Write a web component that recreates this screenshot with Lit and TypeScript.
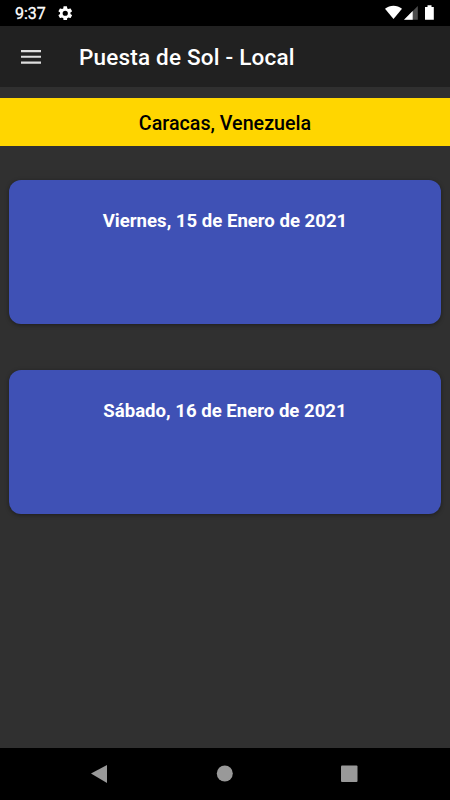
import { LitElement, html, css } from "lit";
import { customElement, property } from "lit/decorators.js";

@customElement("day-card")
class DayCard extends LitElement {
  @property() date = "";
  static styles = css`
    :host { display: block; height: 144.5px; border-radius: 12px; background: #3f51b5; box-shadow: 0 1px 4px rgba(0,0,0,.4); }
    .date { padding-top: 29px; text-align: center; font: 700 18.6px/24px Roboto, sans-serif; color: #fff; white-space: nowrap; }
  `;
  render() { return html`<div class="date">${this.date}</div>`; }
}

@customElement("app-root")
class AppRoot extends LitElement {
  static styles = css`
    :host { display: flex; flex-direction: column; width: 450px; height: 800px; background: #303030; font-family: Roboto, sans-serif; overflow: hidden; }
    .status { height: 26px; background: #000; color: #fff; display: flex; align-items: center; justify-content: space-between; padding: 0 15px; box-sizing: border-box; }
    .group { display: flex; align-items: center; gap: 12px; }
    .time { font: 400 16px/24px Roboto, sans-serif; padding-top: 2px; -webkit-text-stroke: .3px #fff; }
    .bar { height: 61px; background: #212121; display: flex; align-items: center; padding-left: 20.5px; gap: 38px; color: #fff; }
    .title { font: 500 22.5px/30px Roboto, sans-serif; letter-spacing: .2px; white-space: nowrap; padding-top: 1px; }
    .place { margin-top: 11px; height: 48.3px; background: #ffd600; color: #000; text-align: center; font: 500 19.7px/51px Roboto, sans-serif; }
    .list { flex: 1; padding: 33.5px 8.7px 0; display: flex; flex-direction: column; gap: 45.5px; }
    svg { display: block; flex: none; }
  `;
  render() {
    return html`
      <div class="status">
        <div class="group">
          <span class="time">9:37</span>
          <svg width="14.500" height="14.500" viewBox="2 2 20 20" fill="#fff"><path fill-rule="evenodd" d="M19.14 12.94c.04-.3.06-.61.06-.94 0-.32-.02-.64-.07-.94l2.03-1.58a.49.49 0 0 0 .12-.61l-1.92-3.32a.488.488 0 0 0-.59-.22l-2.39.96c-.5-.38-1.03-.7-1.62-.94l-.36-2.54a.484.484 0 0 0-.48-.41h-3.84c-.24 0-.43.17-.47.41l-.36 2.54c-.59.24-1.13.57-1.62.94l-2.39-.96c-.22-.08-.47 0-.59.22L2.74 8.87c-.12.21-.08.47.12.61l2.03 1.58c-.05.3-.09.63-.09.94s.02.64.07.94l-2.03 1.58a.49.49 0 0 0-.12.61l1.92 3.32c.12.22.37.29.59.22l2.39-.96c.5.38 1.03.7 1.62.94l.36 2.54c.05.24.24.41.48.41h3.84c.24 0 .44-.17.47-.41l.36-2.54c.59-.24 1.13-.56 1.62-.94l2.39.96c.22.08.47 0 .59-.22l1.92-3.32c.12-.22.07-.47-.12-.61zM12 15.600a3.600 3.600 0 1 1 0-7.200 3.600 3.600 0 0 1 0 7.200z"/></svg>
        </div>
        <svg width="50" height="26" viewBox="0 0 50 26" fill="#fff"><path d="M0 8.700C5 4.800 12 4.800 17 8.700L8.500 19z"/><path d="M19 19.700 32.800 6v13.700z" fill="#4d4d4d"/><path d="M19 19.700 27.700 11v8.700z"/><path d="M40 7h2.500V5.300h4V7h2.300v12.700H40z"/></svg>
      </div>
      <div class="bar">
        <svg width="20.500" height="14" viewBox="0 0 20.500 14" fill="#dedede"><path d="M0 0h20.500v2.200H0zM0 5.800h20.500v2H0zM0 11.500h20.500v2.200H0z"/></svg>
        <div class="title">Puesta de Sol - Local</div>
      </div>
      <div class="place">Caracas, Venezuela</div>
      <div class="list">
        <day-card date="Viernes, 15 de Enero de 2021"></day-card>
        <day-card date="Sábado, 16 de Enero de 2021"></day-card>
      </div>
      <svg width="450" height="52" viewBox="0 0 450 52"><rect width="450" height="52"/><g fill="#999"><path d="M91 25.500 107 17v18z"/><circle cx="224.800" cy="25.500" r="8"/><rect x="341" y="17.500" width="16.500" height="16.500" rx="1"/></g></svg>
    `;
  }
}
